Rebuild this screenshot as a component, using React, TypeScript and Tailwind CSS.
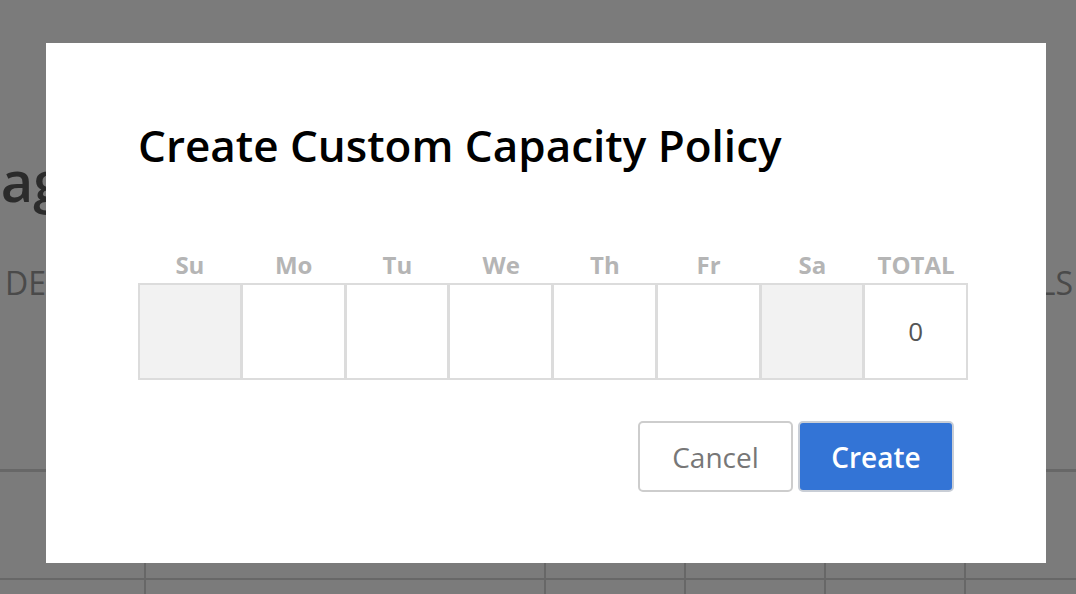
import React from "react";

const days = ["Su", "Mo", "Tu", "We", "Th", "Fr", "Sa"];

export default function App() {
  return (
    <div
      className="relative w-full h-[594px] overflow-hidden bg-[#7b7b7b]"
      style={{ fontFamily: '"Open Sans", "Liberation Sans", sans-serif' }}
    >
      {/* dimmed page behind the modal */}
      <div className="flex flex-col pt-[152px]">
        <h1 className="ml-[-119px] whitespace-nowrap text-[56px] font-semibold leading-none text-[#2b2b2b]">
          Manage Capacity Policies
        </h1>
        <div className="mt-[59px] flex justify-between pl-[5px] pr-[3px] text-[32px] leading-none text-[#4a4a4a]">
          <span>DESCRIPTION</span>
          <span>DETAILS</span>
        </div>
        <div className="mt-[170px] border-t-[3px] border-[#676767]">
          <div className="grid h-[108px] grid-cols-[144px_400px_140px_140px_140px_1fr] border-b-2 border-[#676767]">
            <div />
            <div className="border-l-2 border-[#676767]" />
            <div className="border-l-2 border-[#676767]" />
            <div className="border-l-2 border-[#676767]" />
            <div className="border-l-2 border-[#676767]" />
            <div className="border-l-2 border-[#676767]" />
          </div>
          <div className="grid h-[40px] grid-cols-[144px_400px_140px_140px_140px_1fr]">
            <div />
            <div className="border-l-2 border-[#676767]" />
            <div className="border-l-2 border-[#676767]" />
            <div className="border-l-2 border-[#676767]" />
            <div className="border-l-2 border-[#676767]" />
            <div className="border-l-2 border-[#676767]" />
          </div>
        </div>
      </div>

      {/* modal */}
      <div className="absolute left-[46px] top-[43px] flex h-[520px] w-[1000px] flex-col bg-white pl-[92px] pr-[78px] pt-[80px]">
        <h2 className="whitespace-nowrap text-[44px] font-semibold leading-none text-black">
          Create Custom Capacity Policy
        </h2>

        <div className="mt-[86px] grid grid-cols-8">
          {[...days, "TOTAL"].map((d) => (
            <div
              key={d}
              className="text-center text-[24px] font-bold leading-none text-[#b5b5b5]"
            >
              {d}
            </div>
          ))}
        </div>

        <div className="mt-[6px] grid h-[97px] grid-cols-8">
          {days.map((d, i) => (
            <div
              key={d}
              className={
                "border-2 border-[#dcdcdc] " +
                (i === 0 ? "" : "-ml-[1px] ") +
                (i === 0 || i === 6 ? "bg-[#f2f2f2]" : "bg-white")
              }
            />
          ))}
          <div className="-ml-[1px] flex items-center justify-center border-2 border-[#dcdcdc] bg-white text-[26px] text-[#555555]">
            0
          </div>
        </div>

        <div className="mt-[41px] flex justify-end gap-[5px] pr-[14px]">
          <button className="h-[71px] w-[155px] rounded-[5px] border-2 border-[#cdcdcd] bg-white text-[28px] leading-none text-[#777777]">
            Cancel
          </button>
          <button className="h-[71px] w-[156px] rounded-[5px] border-2 border-[#c9ced6] bg-[#3374d6] text-[28px] font-semibold leading-none text-white">
            Create
          </button>
        </div>
      </div>
    </div>
  );
}
